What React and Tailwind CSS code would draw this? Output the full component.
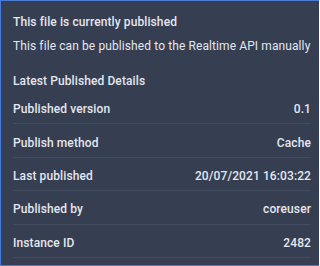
import React from 'react';

const rows = [
    ['Published version', '0.1'],
    ['Publish method', 'Cache'],
    ['Last published', '20/07/2021 16:03:22'],
    ['Published by', 'coreuser'],
    ['Instance ID', '2482'],
];

function App() {
    return (
        <div className="w-[319px] h-[266px] bg-[#363e52] border-t border-l border-b border-[#4a7cd6] text-[#e4e7ee] text-[12px] tracking-[0.1px] font-['Roboto',sans-serif] overflow-hidden">
            <div className="pl-3 pr-[8px] pt-[10px]">
                <p className="h-[22px] leading-[22px] font-medium">This file is currently published</p>
                <p className="h-[24px] leading-[26px]">This file can be published to the Realtime API manually</p>
                <p className="mt-[12px] h-[22px] leading-[24px] font-medium">Latest Published Details</p>

                <div>
                    {rows.map(([label, value]) => (
                        <div key={label} className="flex justify-between items-center h-[33.4px] pt-[4px] border-b border-[#434b60] font-medium">
                            <span>{label}</span>
                            <span>{value}</span>
                        </div>
                    ))}
                </div>
            </div>
        </div>
    );
}

export default App;
